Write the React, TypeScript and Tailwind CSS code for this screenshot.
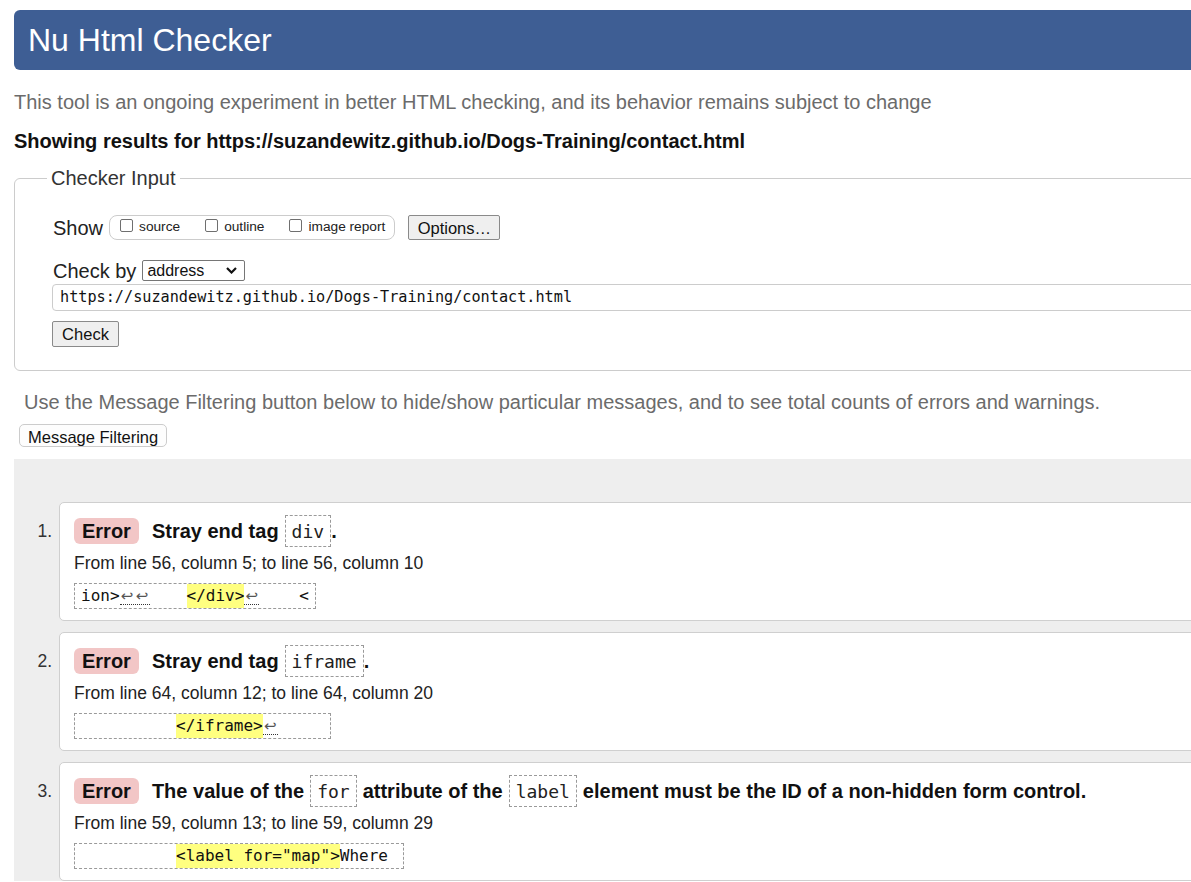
import type { ReactNode } from 'react';

const mono = "font-['DejaVu_Sans_Mono','Liberation_Mono',monospace]";

const Code = ({ children }: { children: ReactNode }) => (
  <span className={`inline-flex h-[32px] items-center border border-dashed border-[#9a9a9a] px-[6px] text-[18px] font-normal text-[#222] ${mono}`}>
    {children}
  </span>
);

const Ret = ({ count = 1 }: { count?: number }) => (
  <span className="inline-flex border-b border-dotted border-[#333] leading-[16px]">
    {Array.from({ length: count }).map((_, i) => (
      <span key={i} className="inline-block w-[15px] text-center font-['DejaVu_Sans',sans-serif] text-[15px] text-[#555]">
        ↩
      </span>
    ))}
  </span>
);

const Gap = ({ w }: { w: string }) => <span className={`inline-block ${w}`} />;

const Mark = ({ children }: { children: ReactNode }) => (
  <span className="bg-[#ffff80]">{children}</span>
);

type MessageProps = {
  num: number;
  title: ReactNode;
  location: string;
  extract: ReactNode;
};

const Message = ({ num, title, location, extract }: MessageProps) => (
  <li className="flex">
    <div className="w-[45px] shrink-0 pr-[7px] pt-[16px] text-right text-[17.5px] text-[#333]">{num}.</div>
    <div className="-mr-10 flex-1 rounded-l-[5px] border border-[#cfcfcf] bg-white pb-[11px] pl-[14px] pt-[12px]">
      <div className="flex h-[32px] items-center whitespace-nowrap text-[20px] font-bold text-[#111]">
        <span className="mr-[13px] flex h-[26px] items-center rounded-[6px] bg-[#f2c6c6] px-[8px]">Error</span>
        {title}
      </div>
      <p className="mt-[6px] text-[17.5px] leading-[20px] text-[#222]">{location}</p>
      <div className={`mt-[10px] inline-flex h-[26px] items-center whitespace-pre border border-dashed border-[#9a9a9a] px-[6px] text-[16px] text-[#111] ${mono}`}>
        {extract}
      </div>
    </div>
  </li>
);

const Checkbox = ({ label }: { label: string }) => (
  <label className="flex items-center gap-[6px]">
    <span className="mb-[4px] h-[13px] w-[13px] rounded-[2px] border border-[#6f6f6f] bg-white" />
    <span className="text-[13.7px] text-[#222]">{label}</span>
  </label>
);

export default function App() {
  return (
    <div className="h-[882px] w-[1191px] overflow-hidden bg-white font-['Liberation_Sans',Arial,sans-serif] text-black">
      <div className="pl-[14px] pt-[10px]">
        <header className="-mr-10 flex h-[60px] items-center rounded-l-[6px] bg-[#3e5e94] pl-[14px]">
          <h1 className="text-[32px] leading-none text-white">Nu Html Checker</h1>
        </header>

        <p className="mt-[21px] text-[20px] leading-[23px] text-[#6b6b6b]">
          This tool is an ongoing experiment in better HTML checking, and its behavior remains subject to change
        </p>
        <p className="mt-[16px] text-[20px] font-bold leading-[23px] text-[#111]">
          Showing results for https://suzandewitz.github.io/Dogs-Training/contact.html
        </p>

        <fieldset className="-mr-10 mt-[14px] rounded-l-[6px] border border-[#cccccc] pb-[23px]">
          <legend className="ml-[32px] px-[4px] text-[20px] leading-[23px] text-[#333]">Checker Input</legend>
          <div className="pl-[38px]">
            <div className="mt-[25px] flex h-[25px] items-center">
              <span className="text-[20px] text-[#222]">Show</span>
              <div className="ml-[6px] flex h-[25px] items-center gap-[25px] rounded-[8px] border border-[#cccccc] pl-[10px] pr-[9px]">
                <Checkbox label="source" />
                <Checkbox label="outline" />
                <Checkbox label="image report" />
              </div>
              <button className="ml-[13px] h-[25px] w-[92px] rounded-[2px] border border-[#8a8a8a] bg-[#efefef] text-[16.5px] text-[#111]">
                Options…
              </button>
            </div>

            <div className="mt-[20px] flex h-[21px] items-center">
              <span className="text-[20px] text-[#222]">Check by</span>
              <div className="ml-[6px] flex h-[21px] w-[103px] items-center justify-between rounded-[2px] border border-[#767676] bg-white pl-[4px] pr-[7px]">
                <span className="text-[16px] text-[#111]">address</span>
                <svg width="11" height="7" viewBox="0 0 11 7" fill="none">
                  <path d="M1 1l4.5 4.5L10 1" stroke="#111" strokeWidth="2.2" />
                </svg>
              </div>
            </div>

            <div className={`-ml-px mt-[3px] flex h-[27px] items-center rounded-l-[4px] border border-[#cccccc] pl-[7px] text-[15.2px] text-[#111] ${mono}`}>
              https://suzandewitz.github.io/Dogs-Training/contact.html
            </div>

            <button className="-ml-px mt-[10px] h-[26px] w-[67px] rounded-[2px] border border-[#8a8a8a] bg-[#efefef] text-[16.5px] text-[#111]">
              Check
            </button>
          </div>
        </fieldset>

        <p className="ml-[10px] mt-[20px] text-[20px] leading-[23px] text-[#6b6b6b]">
          Use the Message Filtering button below to hide/show particular messages, and to see total counts of errors and warnings.
        </p>
        <button className="ml-[5px] mt-[10px] h-[23px] rounded-[5px] border border-[#cccccc] bg-[#fdfdfd] px-[8px] text-[16.5px] text-[#111]">
          Message Filtering
        </button>

        <section className="-mr-10 mt-[9px] bg-[#eeeeee] pt-[43px]">
          <ol className="flex flex-col gap-[11px]">
            <Message
              num={1}
              title={
                <>
                  <span className="mr-[6px]">Stray end tag</span>
                  <Code>div</Code>
                  <span>.</span>
                </>
              }
              location="From line 56, column 5; to line 56, column 10"
              extract={
                <>
                  ion&gt;<Ret count={2} />
                  <Gap w="w-[37px]" />
                  <Mark>&lt;/div&gt;</Mark>
                  <Ret />
                  <Gap w="w-[40px]" />
                  &lt;
                </>
              }
            />
            <Message
              num={2}
              title={
                <>
                  <span className="mr-[6px]">Stray end tag</span>
                  <Code>iframe</Code>
                  <span>.</span>
                </>
              }
              location="From line 64, column 12; to line 64, column 20"
              extract={
                <>
                  <Gap w="w-[95px]" />
                  <Mark>&lt;/iframe&gt;</Mark>
                  <Ret />
                  <Gap w="w-[46px]" />
                </>
              }
            />
            <Message
              num={3}
              title={
                <>
                  <span className="mr-[6px]">The value of the</span>
                  <Code>for</Code>
                  <span className="mx-[6px]">attribute of the</span>
                  <Code>label</Code>
                  <span className="ml-[6px]">element must be the ID of a non-hidden form control.</span>
                </>
              }
              location="From line 59, column 13; to line 59, column 29"
              extract={
                <>
                  <Gap w="w-[95px]" />
                  <Mark>&lt;label for="map"&gt;</Mark>
                  Where
                  <Gap w="w-[9px]" />
                </>
              }
            />
          </ol>
        </section>
      </div>
    </div>
  );
}
